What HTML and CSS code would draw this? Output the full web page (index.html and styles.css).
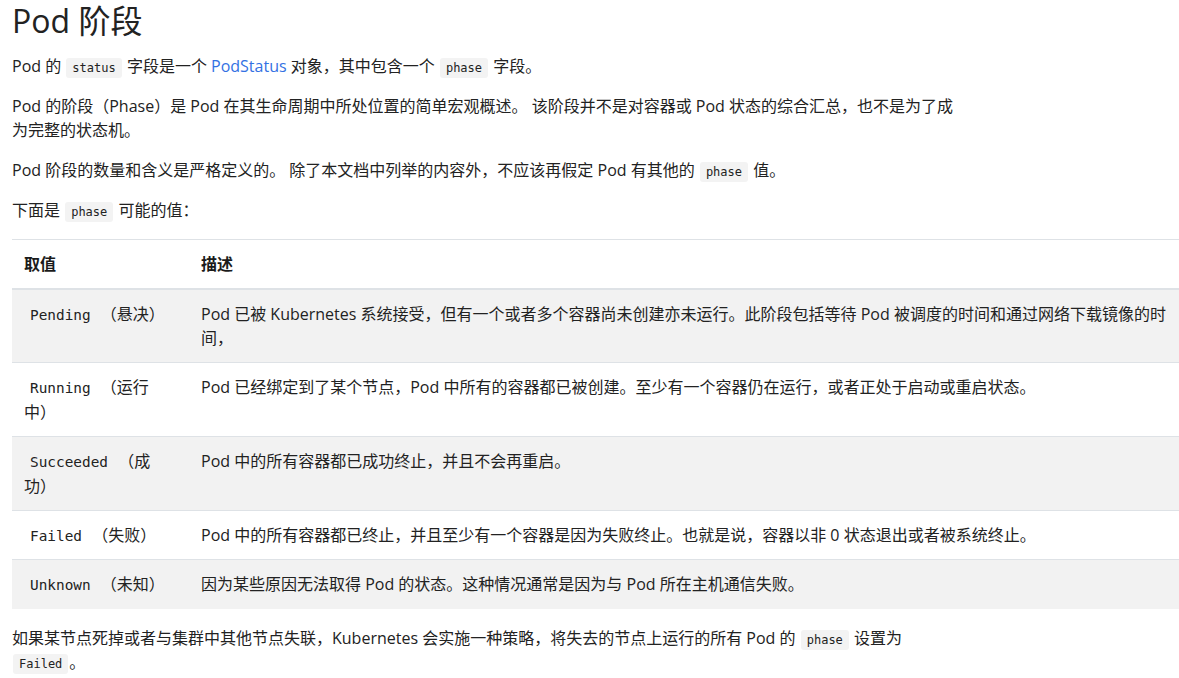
FILE: index.html
```html
<!DOCTYPE html>
<html lang="zh-CN">
<head>
<meta charset="utf-8">
<title>Pod 阶段</title>
<link rel="stylesheet" href="styles.css">
</head>
<body>
<main class="content">
  <h1 class="title">Pod 阶段</h1>
  <p class="para">Pod 的 <code class="code">status</code> 字段是一个 <a class="link" href="#">PodStatus</a> 对象，其中包含一个 <code class="code">phase</code> 字段。</p>
  <p class="para">Pod 的阶段（Phase）是 Pod 在其生命周期中所处位置的简单宏观概述。 该阶段并不是对容器或 Pod 状态的综合汇总，也不是为了成为完整的状态机。</p>
  <p class="para">Pod 阶段的数量和含义是严格定义的。 除了本文档中列举的内容外，不应该再假定 Pod 有其他的 <code class="code">phase</code> 值。</p>
  <p class="para">下面是 <code class="code">phase</code> 可能的值：</p>
  <table class="phase-table">
    <colgroup>
      <col class="col-value">
      <col class="col-desc">
    </colgroup>
    <thead>
      <tr><th class="th th-value">取值</th><th class="th">描述</th></tr>
    </thead>
    <tbody>
      <tr class="row odd"><td class="td td-value"><code class="tcode">Pending</code> （悬决）</td><td class="td">Pod 已被 Kubernetes 系统接受，但有一个或者多个容器尚未创建亦未运行。此阶段包括等待 Pod 被调度的时间和通过网络下载镜像的时间，</td></tr>
      <tr class="row"><td class="td td-value"><code class="tcode">Running</code> （运行中）</td><td class="td">Pod 已经绑定到了某个节点，Pod 中所有的容器都已被创建。至少有一个容器仍在运行，或者正处于启动或重启状态。</td></tr>
      <tr class="row odd"><td class="td td-value"><code class="tcode">Succeeded</code> （成功）</td><td class="td">Pod 中的所有容器都已成功终止，并且不会再重启。</td></tr>
      <tr class="row"><td class="td td-value"><code class="tcode">Failed</code> （失败）</td><td class="td">Pod 中的所有容器都已终止，并且至少有一个容器是因为失败终止。也就是说，容器以非 0 状态退出或者被系统终止。</td></tr>
      <tr class="row odd"><td class="td td-value"><code class="tcode">Unknown</code> （未知）</td><td class="td">因为某些原因无法取得 Pod 的状态。这种情况通常是因为与 Pod 所在主机通信失败。</td></tr>
    </tbody>
  </table>
  <p class="para">如果某节点死掉或者与集群中其他节点失联，Kubernetes 会实施一种策略，将失去的节点上运行的所有 Pod 的 <code class="code">phase</code> 设置为 <code class="code">Failed</code>。</p>
</main>
</body>
</html>
```

FILE: styles.css
```css
html, body {
  margin: 0;
  padding: 0;
  background: #ffffff;
}

body {
  font-family: "Open Sans", "Noto Sans CJK SC", sans-serif;
  font-size: 16px;
  line-height: 1.5;
  color: #222222;
  text-spacing-trim: space-all;
}

.content {
  display: flex;
  flex-direction: column;
  align-items: stretch;
  padding: 0 0 0 12px;
}

.title {
  font-size: 32px;
  font-weight: 400;
  line-height: 1.2;
  padding-top: 2px;
  margin: 0 0 14px 0;
  color: #222222;
}

.para {
  margin: 0 0 16px 0;
  max-width: 950px;
}

.link {
  color: #3371e3;
  text-decoration: none;
}

.code {
  font-family: "DejaVu Sans Mono", monospace;
  font-size: 12px;
  background: #f3f3f3;
  border-radius: 3px;
  padding: 3px 6px;
  margin: 0 1px;
}

.phase-table {
  width: 100%;
  border-collapse: collapse;
  table-layout: fixed;
  margin: 1px 0 17px 0;
}

.col-value {
  width: 177px;
}

.th {
  text-align: left;
  font-weight: 700;
  color: #1a1a1a;
  padding: 12px;
  border-top: 1px solid #dee2e6;
  border-bottom: 2px solid #dee2e6;
  vertical-align: bottom;
}

.td {
  padding: 12px;
  border-top: 1px solid #dee2e6;
  vertical-align: top;
}

.td-value,
.th-value {
  padding-right: 19px;
}

.row.odd {
  background: #f2f2f2;
}

.tcode {
  font-family: "DejaVu Sans Mono", monospace;
  font-size: 14.4px;
  padding: 0 6px;
}
```
